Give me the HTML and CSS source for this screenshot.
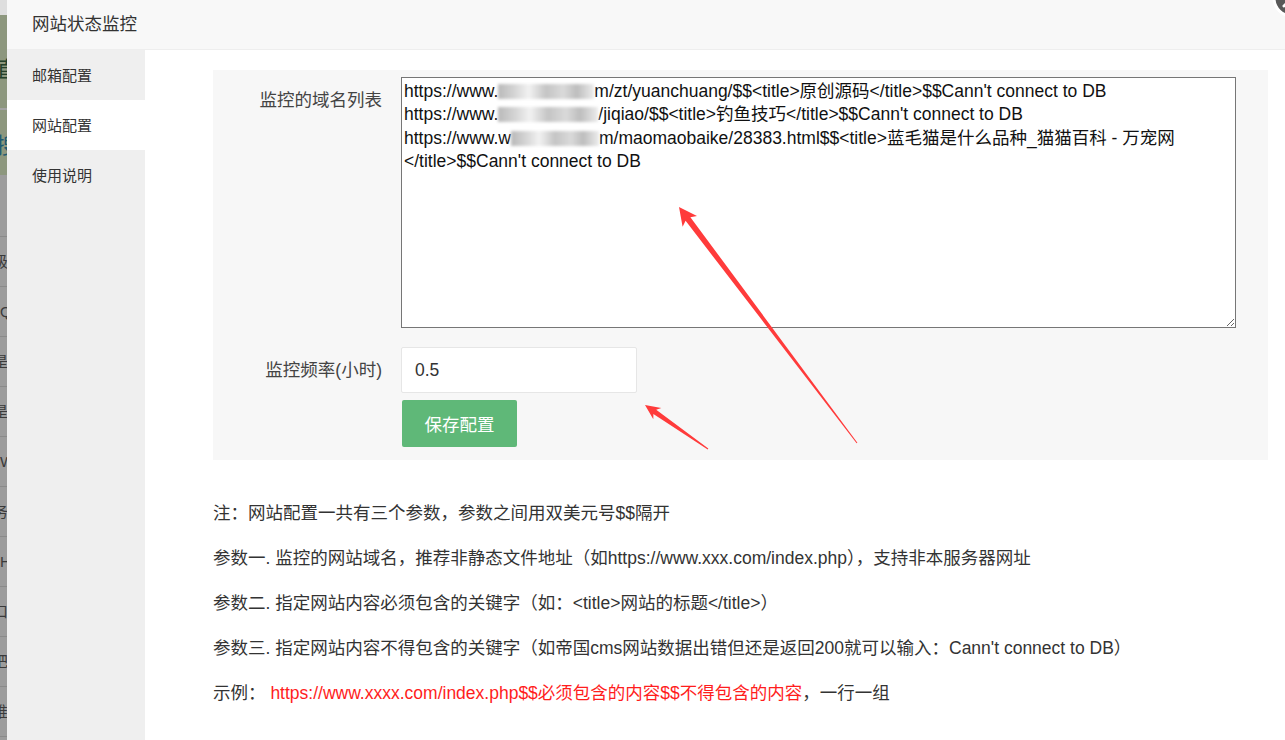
FILE: index.html
```html
<!DOCTYPE html>
<html lang="zh-CN">
<head>
    <meta charset="UTF-8">
    <meta name="viewport" content="width=device-width, initial-scale=1.0">
    <title>网站状态监控</title>
    <link rel="stylesheet" href="styles.css">
</head>
<body>
    <!-- dimmed page behind the popup -->
    <div class="backdrop">
        <div class="bd-light"></div>
        <div class="bd-green"><span class="bd-char">直</span></div>
        <div class="bd-gap"></div>
        <div class="bd-green bd-green-short"><span class="bd-char bd-char-blue">搜</span></div>
        <div class="bd-gray"></div>
        <div class="bd-row"></div>
        <div class="bd-row">级</div>
        <div class="bd-row bd-latin">QQ</div>
        <div class="bd-row">是</div>
        <div class="bd-row">是</div>
        <div class="bd-row bd-latin">W</div>
        <div class="bd-row">务</div>
        <div class="bd-row bd-latin">H</div>
        <div class="bd-row">口</div>
        <div class="bd-row">把</div>
        <div class="bd-row">推</div>
    </div>

    <div class="layer">
        <div class="layer-title">网站状态监控</div>
        <svg class="layer-close" width="40" height="40" viewBox="0 0 40 40">
            <circle cx="20" cy="20" r="18" fill="#595959" stroke="#fff" stroke-width="3"/>
            <path d="M12 12 L28 28 M28 12 L12 28" stroke="#fff" stroke-width="3" stroke-linecap="round"/>
        </svg>

        <div class="layer-body">
            <ul class="side-nav">
                <li>邮箱配置</li>
                <li class="active">网站配置</li>
                <li>使用说明</li>
            </ul>

            <div class="main">
                <form class="panel">
                    <div class="form-item form-item-list">
                        <label class="form-label">监控的域名列表</label>
                        <div class="domain-list" contenteditable="true">https://www.<span class="redact redact-1"></span>m/zt/yuanchuang/$$&lt;title&gt;原创源码&lt;/title&gt;$$Cann't connect to DB<br>https://www.<span class="redact redact-2"></span>/jiqiao/$$&lt;title&gt;钓鱼技巧&lt;/title&gt;$$Cann't connect to DB<br>https://www.w<span class="redact redact-3"></span>m/maomaobaike/28383.html$$&lt;title&gt;蓝毛猫是什么品种_猫猫百科 - 万宠网&lt;/title&gt;$$Cann't connect to DB</div>
                    </div>
                    <div class="form-item form-item-freq">
                        <label class="form-label">监控频率(小时)</label>
                        <input class="freq-input" type="text" value="0.5">
                    </div>
                    <div class="form-item">
                        <button type="button" class="save-button">保存配置</button>
                    </div>
                </form>

                <div class="notes">
                    <p>注：网站配置一共有三个参数，参数之间用双美元号$$隔开</p>
                    <p>参数一. 监控的网站域名，推荐非静态文件地址（如https://www.xxx.com/index.php），支持非本服务器网址</p>
                    <p>参数二. 指定网站内容必须包含的关键字（如：&lt;title&gt;网站的标题&lt;/title&gt;）</p>
                    <p>参数三. 指定网站内容不得包含的关键字（如帝国cms网站数据出错但还是返回200就可以输入：Cann't connect to DB）</p>
                    <p>示例： <span class="example">https://www.xxxx.com/index.php$$必须包含的内容$$不得包含的内容</span>，一行一组</p>
                </div>
            </div>
        </div>
    </div>

    <!-- red arrows drawn on top of the screenshot -->
    <svg class="annotations" width="1285" height="740" viewBox="0 0 1285 740">
        <polygon fill="#ff3b3b" points="679,207 697,216 690.4,217.2 857.4,442.7 856.6,443.3 685.6,220.8 682.6,226.8"/>
        <polygon fill="#ff3b3b" points="645,405 661.3,407.9 656.2,409.8 708.3,448.6 707.7,449.4 653.4,413.9 653.3,419.3"/>
    </svg>
</body>
</html>
```

FILE: styles.css
```css
body {
    margin: 0;
    width: 1285px;
    height: 740px;
    overflow: hidden;
    display: flex;
    position: relative;
    font-family: "Liberation Sans", "Noto Sans CJK SC", sans-serif;
    color: #333;
    background-color: #fff;
}

/* page behind the popup */
.backdrop {
    flex: 0 0 7px;
    display: flex;
    flex-direction: column;
    background-color: #9c9c9c;
    overflow: hidden;
}
.bd-light {
    height: 15px;
    background-color: #dedede;
}
.bd-green {
    height: 93px;
    background-color: #8d977e;
    display: flex;
    align-items: center;
    overflow: hidden;
}
.bd-green-short {
    height: 65px;
}
.bd-gap {
    height: 2px;
    background-color: #a3a3a3;
}
.bd-gray {
    height: 12px;
}
.bd-char {
    font-size: 22px;
    color: #24402a;
    margin-left: -4px;
    margin-top: 10px;
}
.bd-char-blue {
    color: #1f5a72;
    margin-top: 0;
}
.bd-row {
    flex: 0 0 49px;
    border-bottom: 1px solid #8a8a8a;
    line-height: 49px;
    font-size: 15px;
    color: #3a3a3a;
    white-space: nowrap;
    text-indent: -7px;
}
.bd-row.bd-latin {
    text-indent: 0;
}

/* popup */
.layer {
    flex: 1;
    display: flex;
    flex-direction: column;
    position: relative;
    background-color: #fff;
}
.layer-title {
    height: 49px;
    line-height: 48px;
    padding-left: 25px;
    font-size: 17.5px;
    color: #333;
    background-color: #f8f8f8;
    border-bottom: 1px solid #eee;
}
.layer-close {
    position: absolute;
    top: -22px;
    right: -27px;
}
.layer-body {
    flex: 1;
    display: flex;
}

.side-nav {
    flex: 0 0 138px;
    margin: 0;
    padding: 0;
    list-style: none;
    background-color: #efefef;
}
.side-nav li {
    height: 50px;
    line-height: 51px;
    padding-left: 25px;
    font-size: 15px;
    color: #333;
}
.side-nav li.active {
    background-color: #fff;
}

.main {
    flex: 1;
    padding: 20px 17px 0 68px;
}

.panel {
    background-color: #f7f7f7;
    padding: 7px 0 13px;
}
.form-item {
    display: flex;
    align-items: flex-start;
}
.form-item-list {
    margin-bottom: 19px;
}
.form-item-freq {
    margin-bottom: 7px;
}
.form-label {
    flex: 0 0 188px;
    box-sizing: border-box;
    padding: 11px 19px 0 0;
    text-align: right;
    font-size: 17.5px;
    line-height: 25px;
    color: #444;
}
.domain-list {
    flex: 1;
    margin-right: 32px;
    height: 251px;
    box-sizing: border-box;
    padding: 2px 2px 1px;
    border: 1px solid #767676;
    background-color: #fff;
    font-size: 17.5px;
    line-height: 23.4px;
    color: #111;
    overflow: auto;
    resize: vertical;
    outline: none;
}
.redact {
    display: inline-block;
    height: 15px;
    vertical-align: -2px;
    background: linear-gradient(90deg, #b9b9b9 0, #d6d6d6 18%, #f2f2f2 32%, #c4c4c4 50%, #dadada 68%, #bdbdbd 82%, #ececec 100%);
    filter: blur(1.5px);
}
.redact-1 {
    width: 96px;
}
.redact-2 {
    width: 100px;
}
.redact-3 {
    width: 88px;
}
.freq-input {
    width: 236px;
    height: 46px;
    box-sizing: border-box;
    padding: 0 0 0 13px;
    border: 1px solid #e6e6e6;
    border-radius: 2px;
    font-family: inherit;
    font-size: 17.5px;
    color: #333;
    outline: none;
}
.save-button {
    margin-left: 189px;
    width: 115px;
    height: 47px;
    border: none;
    border-radius: 2px;
    background-color: #5fb878;
    color: #fff;
    font-family: inherit;
    font-size: 17.5px;
    cursor: pointer;
}

.notes {
    padding-top: 41px;
}
.notes p {
    margin: 0 0 20px;
    font-size: 17.5px;
    line-height: 25px;
    color: #333;
}
.example {
    color: #ff1d1d;
}

.annotations {
    position: absolute;
    top: 0;
    left: 0;
    pointer-events: none;
}
```
